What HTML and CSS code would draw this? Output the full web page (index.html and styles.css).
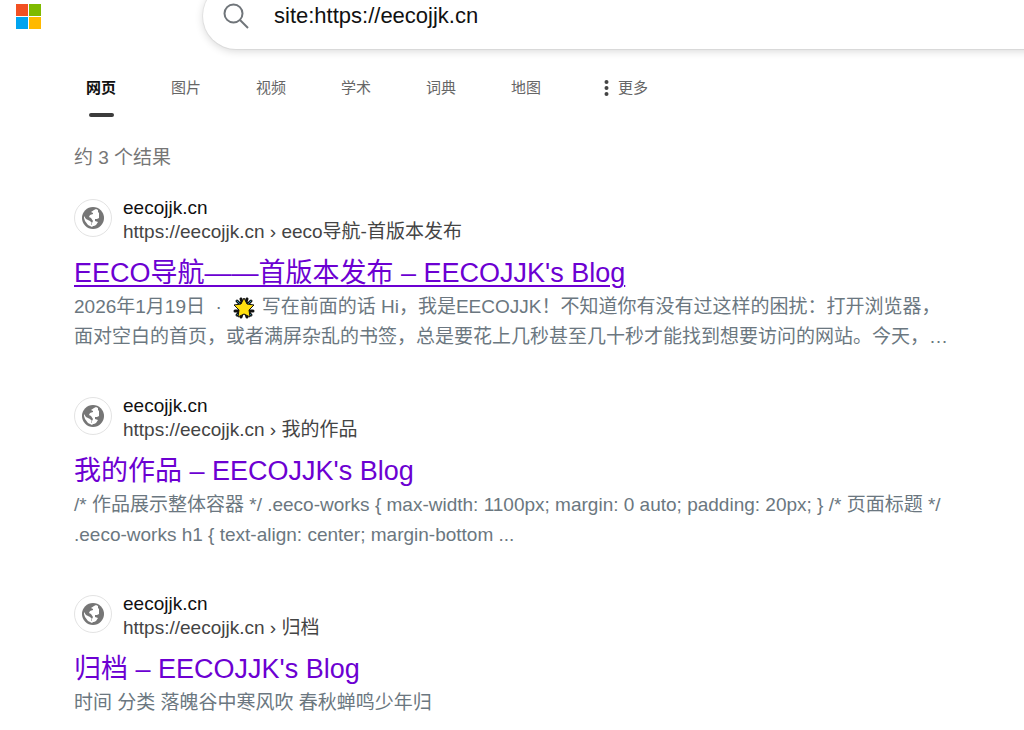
FILE: index.html
```html
<!DOCTYPE html>
<html lang="zh-CN">
<head>
    <meta charset="UTF-8">
    <meta name="viewport" content="width=device-width, initial-scale=1.0">
    <title>site:https://eecojjk.cn - 搜索</title>
    <link rel="stylesheet" href="styles.css">
</head>
<body>
    <svg class="defs" aria-hidden="true">
        <symbol id="globe" viewBox="0 0 22 22">
            <circle cx="11" cy="11" r="11"/>
            <path fill="#fff" d="M12 3l2-1 2 1v2l1 1v5l-2 1h-2v2l3 1-2 3-2 1h-2v-3l1-2-2-3-2-1 1-2 3-1V6l-2-1z"/>
            <path fill="#fff" d="M2 9l2 3 4 2 2 2-1 1 2 2-1 1-4-2-3-4-1-3z"/>
        </symbol>
    </svg>

    <header class="header">
        <a class="logo" href="#" aria-label="Microsoft">
            <svg width="25" height="25" viewBox="0 0 25 25">
                <path fill="#f25022" d="M0 0h12v12H0z"/>
                <path fill="#7fba00" d="M13 0h12v12H13z"/>
                <path fill="#00a4ef" d="M0 13h12v12H0z"/>
                <path fill="#ffb900" d="M13 13h12v12H13z"/>
            </svg>
        </a>
        <form class="search-box">
            <svg width="26" height="26" viewBox="0 0 26 26" fill="none" stroke="#70757a" stroke-width="2">
                <circle cx="10.500" cy="10.500" r="9"/>
                <path d="M17 17l8 8"/>
            </svg>
            <input type="text" class="search-input" aria-label="搜索" value="site:https://eecojjk.cn">
        </form>
    </header>

    <nav class="tabs">
        <a class="tab active" href="#">网页</a>
        <a class="tab" href="#">图片</a>
        <a class="tab" href="#">视频</a>
        <a class="tab" href="#">学术</a>
        <a class="tab" href="#">词典</a>
        <a class="tab" href="#">地图</a>
        <a class="tab more" href="#">
            <svg width="5" height="16" viewBox="0 0 5 16" fill="#444">
                <circle cx="2.500" cy="2" r="2"/>
                <circle cx="2.500" cy="8" r="2"/>
                <circle cx="2.500" cy="14" r="2"/>
            </svg>
            更多
        </a>
    </nav>

    <main class="results">
        <p class="count">约 3 个结果</p>

        <article class="result">
            <div class="source">
                <span class="favicon"><svg width="22" height="22"><use href="#globe"/></svg></span>
                <div>
                    <div class="site">eecojjk.cn</div>
                    <div class="url">https://eecojjk.cn › eeco导航-首版本发布</div>
                </div>
            </div>
            <h2 class="title"><a class="hovered" href="#">EECO导航——首版本发布 – EECOJJK's Blog</a></h2>
            <p class="snippet">2026年1月19日&nbsp;&nbsp;·&nbsp; <svg class="emoji" width="24" height="24" viewBox="0 0 24 24">
                    <path stroke="#111" stroke-width="3" stroke-linecap="round" d="M5 5l14 14M19 5L5 19M3 15h18M9 3l6 18M15 3L9 21"/>
                    <path stroke="#2a8fb0" stroke-width="1" stroke-linecap="round" d="M5 5l14 14M19 5L5 19"/>
                    <path fill="#ffdf10" stroke="#111" stroke-width="1" stroke-linejoin="round" d="M12 2l3 6 7 1-5 5 1 7-6-3-6 3 1-7-5-5 7-1z"/>
                </svg> 写在前面的话 Hi，我是EECOJJK！不知道你有没有过这样的困扰：打开浏览器，面对空白的首页，或者满屏杂乱的书签，总是要花上几秒甚至几十秒才能找到想要访问的网站。今天，…</p>
        </article>

        <article class="result">
            <div class="source">
                <span class="favicon"><svg width="22" height="22"><use href="#globe"/></svg></span>
                <div>
                    <div class="site">eecojjk.cn</div>
                    <div class="url">https://eecojjk.cn › 我的作品</div>
                </div>
            </div>
            <h2 class="title"><a href="#">我的作品 – EECOJJK's Blog</a></h2>
            <p class="snippet">/* 作品展示整体容器 */ .eeco-works { max-width: 1100px; margin: 0 auto; padding: 20px; } /* 页面标题 */ .eeco-works h1 { text-align: center; margin-bottom ...</p>
        </article>

        <article class="result">
            <div class="source">
                <span class="favicon"><svg width="22" height="22"><use href="#globe"/></svg></span>
                <div>
                    <div class="site">eecojjk.cn</div>
                    <div class="url">https://eecojjk.cn › 归档</div>
                </div>
            </div>
            <h2 class="title"><a href="#">归档 – EECOJJK's Blog</a></h2>
            <p class="snippet">时间 分类 落魄谷中寒风吹 春秋蝉鸣少年归</p>
        </article>
    </main>
</body>
</html>
```
FILE: styles.css
```css
* {
    box-sizing: border-box;
}
body {
    margin: 0;
    font-family: "Liberation Sans", "Noto Sans CJK SC", sans-serif;
    font-size: 19px;
    background-color: #fff;
    overflow: hidden;
}
a {
    text-decoration: none;
}
.defs {
    display: block;
    width: 0;
    height: 0;
}
.header {
    display: flex;
    align-items: center;
    margin-top: -17px;
    padding-left: 16px;
}
.logo {
    display: flex;
    width: 187px;
}
.search-box {
    display: flex;
    flex: 1;
    align-items: center;
    gap: 25px;
    height: 66px;
    margin-right: -40px;
    padding-left: 20px;
    border-radius: 33px;
    background-color: #fff;
    box-shadow: 0 0 0 1px rgba(0, 0, 0, 0.05), 0 2px 8px rgba(0, 0, 0, 0.16);
}
.search-input {
    flex: 1;
    padding: 0;
    border: none;
    outline: none;
    background: none;
    color: #111;
    font-family: inherit;
    font-size: 22px;
}
.tabs {
    display: flex;
    gap: 55px;
    padding: 27px 0 0 86px;
}
.tab {
    display: flex;
    flex-direction: column;
    align-items: center;
    color: #666;
    font-size: 15px;
    line-height: 24px;
}
.tab.active {
    color: #111;
    font-weight: bold;
}
.tab::after {
    content: "";
    width: 25px;
    height: 4px;
    margin-top: 13px;
    border-radius: 2px;
}
.tab.active::after {
    background-color: #3c3c3c;
}
.more {
    flex-direction: row;
    align-items: center;
    align-self: flex-start;
    gap: 9px;
    padding-left: 8px;
}
.more::after {
    display: none;
}
.results {
    padding: 28px 20px 0 74px;
}
.count {
    margin: 0 0 26px;
    color: #767676;
    line-height: 25px;
}
.result {
    max-width: 878px;
    margin-bottom: 42px;
}
.source {
    display: flex;
    align-items: flex-start;
    gap: 11px;
    margin-bottom: 11px;
    line-height: 24px;
}
.favicon {
    display: flex;
    align-items: center;
    justify-content: center;
    width: 38px;
    height: 38px;
    margin-top: 3px;
    border: 1px solid #e3e3e3;
    border-radius: 50%;
    fill: #767676;
}
.site {
    color: #111;
}
.url {
    color: #444;
}
.title {
    margin: 0 0 1px;
    font-size: 27px;
    font-weight: normal;
    line-height: 36px;
}
.title a {
    color: #6c00d2;
}
.title .hovered,
.title a:hover {
    text-decoration: underline;
    text-decoration-thickness: 2px;
    text-underline-offset: 3px;
}
.snippet {
    margin: 0;
    color: #6b7780;
    line-height: 30px;
}
.emoji {
    vertical-align: middle;
    fill: none;
}
```
